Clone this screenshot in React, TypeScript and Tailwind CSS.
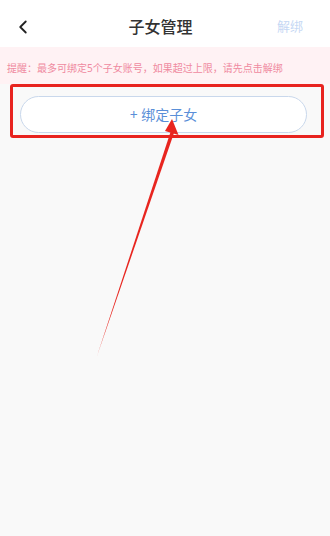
import { ChevronLeft } from 'lucide-react';

const font = { fontFamily: '"Noto Sans", "Noto Sans CJK SC", sans-serif' };

function Arrow() {
  // red annotation arrow pointing at the bind button
  return (
    <svg
      className="pointer-events-none absolute left-0 top-0"
      width="330"
      height="536"
      viewBox="0 0 330 536"
    >
      <polygon points="170.5,132 174,133 97,356" fill="#e8251f" />
      <polygon points="172,119 178.5,135 165,131" fill="#e8251f" />
    </svg>
  );
}

export default function App() {
  return (
    <div className="relative flex h-[536px] w-[330px] flex-col overflow-hidden bg-[#f9f9f9]" style={font}>
      <header className="flex h-[47px] items-center justify-between bg-white px-3 pt-[6px]">
        <ChevronLeft size={22} strokeWidth={2} className="text-[#222]" />
        <h1 className="pl-[10px] text-[16px] font-medium text-[#333]">子女管理</h1>
        <span className="pr-[15px] text-[13px] text-[#c6d8f4]">解绑</span>
      </header>

      <div className="h-[37px] bg-[#fff2f4] px-[7px] pt-[15px]">
        <p className="text-[10px] leading-[13px] text-[#ef8aa0]">提醒：最多可绑定5个子女账号，如果超过上限，请先点击解绑</p>
      </div>

      <div className="ml-[10px] mr-[6px] rounded-[3px] border-[3px] border-[#e8231f] pb-[2px] pl-[7px] pr-[14px] pt-[9px]">
        <button
          type="button"
          className="flex h-[37px] w-full items-center justify-center rounded-full border border-[#c9d8ec] bg-white text-[14px] text-[#5a8fd8]"
        >
          + 绑定子女
        </button>
      </div>

      <Arrow />
    </div>
  );
}
